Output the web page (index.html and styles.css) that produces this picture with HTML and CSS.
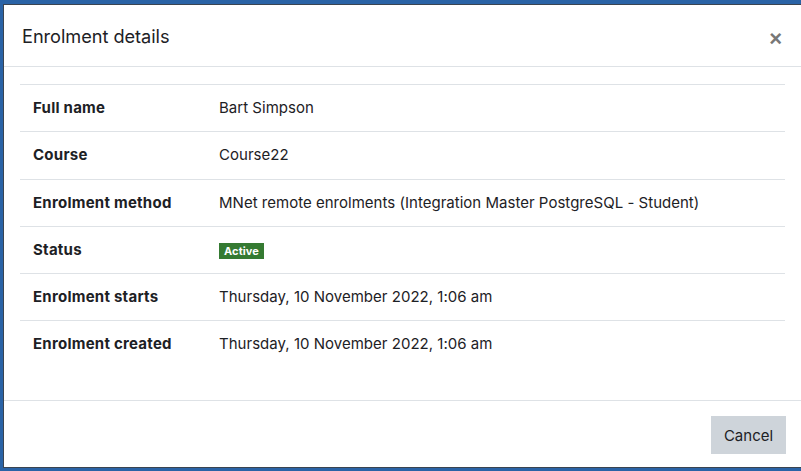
FILE: index.html
```html
<!DOCTYPE html>
<html lang="en">
<head>
<meta charset="utf-8">
<title>Enrolment details</title>
<link rel="stylesheet" href="styles.css">
</head>
<body>
<div class="backdrop">
  <div class="modal">
    <div class="modal-header">
      <h5 class="modal-title">Enrolment details</h5>
      <button class="close" type="button" aria-label="Close">×</button>
    </div>
    <div class="modal-body">
      <table class="details">
        <tbody>
          <tr><th>Full name</th><td>Bart Simpson</td></tr>
          <tr><th>Course</th><td>Course22</td></tr>
          <tr><th>Enrolment method</th><td>MNet remote enrolments (Integration Master PostgreSQL - Student)</td></tr>
          <tr><th>Status</th><td><span class="badge">Active</span></td></tr>
          <tr><th>Enrolment starts</th><td>Thursday, 10 November 2022, 1:06 am</td></tr>
          <tr><th>Enrolment created</th><td>Thursday, 10 November 2022, 1:06 am</td></tr>
        </tbody>
      </table>
    </div>
    <div class="modal-footer">
      <button class="btn" type="button">Cancel</button>
    </div>
  </div>
</div>
</body>
</html>
```

FILE: styles.css
```css
html, body {
  margin: 0;
  padding: 0;
  height: 100%;
  overflow: hidden;
}
body {
  background: #2a63a6;
  font-family: "Inter", "Noto Sans", sans-serif;
  color: #1d2125;
  font-size: 15px;
}
.backdrop {
  padding: 4px 0 0 3px;
}
.modal {
  width: 798px;
  height: 464px;
  background: #fff;
  border: 1px solid #3b4450;
  border-right: none;
  box-sizing: border-box;
  display: flex;
  flex-direction: column;
}
.modal-header {
  display: flex;
  align-items: center;
  justify-content: space-between;
  height: 62px;
  padding: 0 16px 0 18px;
  border-bottom: 1px solid #dee2e6;
  box-sizing: border-box;
}
.modal-title {
  margin: 0;
  font-size: 18.2px;
  font-weight: 400;
  letter-spacing: -0.05px;
}
.close {
  border: none;
  background: none;
  padding: 0;
  font-family: "Liberation Sans", sans-serif;
  font-size: 22px;
  font-weight: 700;
  line-height: 1;
  color: #777;
  margin-right: 3px;
  margin-top: 6px;
}
.modal-body {
  flex: 1;
  padding: 17px 16px 16px 16px;
}
.details {
  width: 100%;
  border-collapse: collapse;
}
.details th, .details td {
  border-top: 1px solid #dee2e6;
  padding: 12px 13px;
  line-height: 22.25px;
  text-align: left;
  vertical-align: middle;
  font-size: 15px;
  letter-spacing: 0.02px;
}
.details th {
  font-weight: 700;
  width: 160px;
  letter-spacing: 0.25px;
}
.badge {
  display: inline-block;
  background: #357a32;
  color: #fff;
  font-size: 11px;
  font-weight: 700;
  padding: 2px 5px;
  line-height: 12px;
  letter-spacing: 0.1px;
  vertical-align: middle;
}
.modal-footer {
  display: flex;
  justify-content: flex-end;
  align-items: center;
  border-top: 1px solid #dee2e6;
  height: 67px;
  padding: 0 15px 0 0;
  box-sizing: border-box;
}
.btn {
  border: none;
  background: #ced4da;
  color: #1d2125;
  font-family: "Inter", "Noto Sans", sans-serif;
  font-size: 15px;
  width: 75px;
  height: 38px;
  padding: 0;
  margin-top: 2px;
}
```
